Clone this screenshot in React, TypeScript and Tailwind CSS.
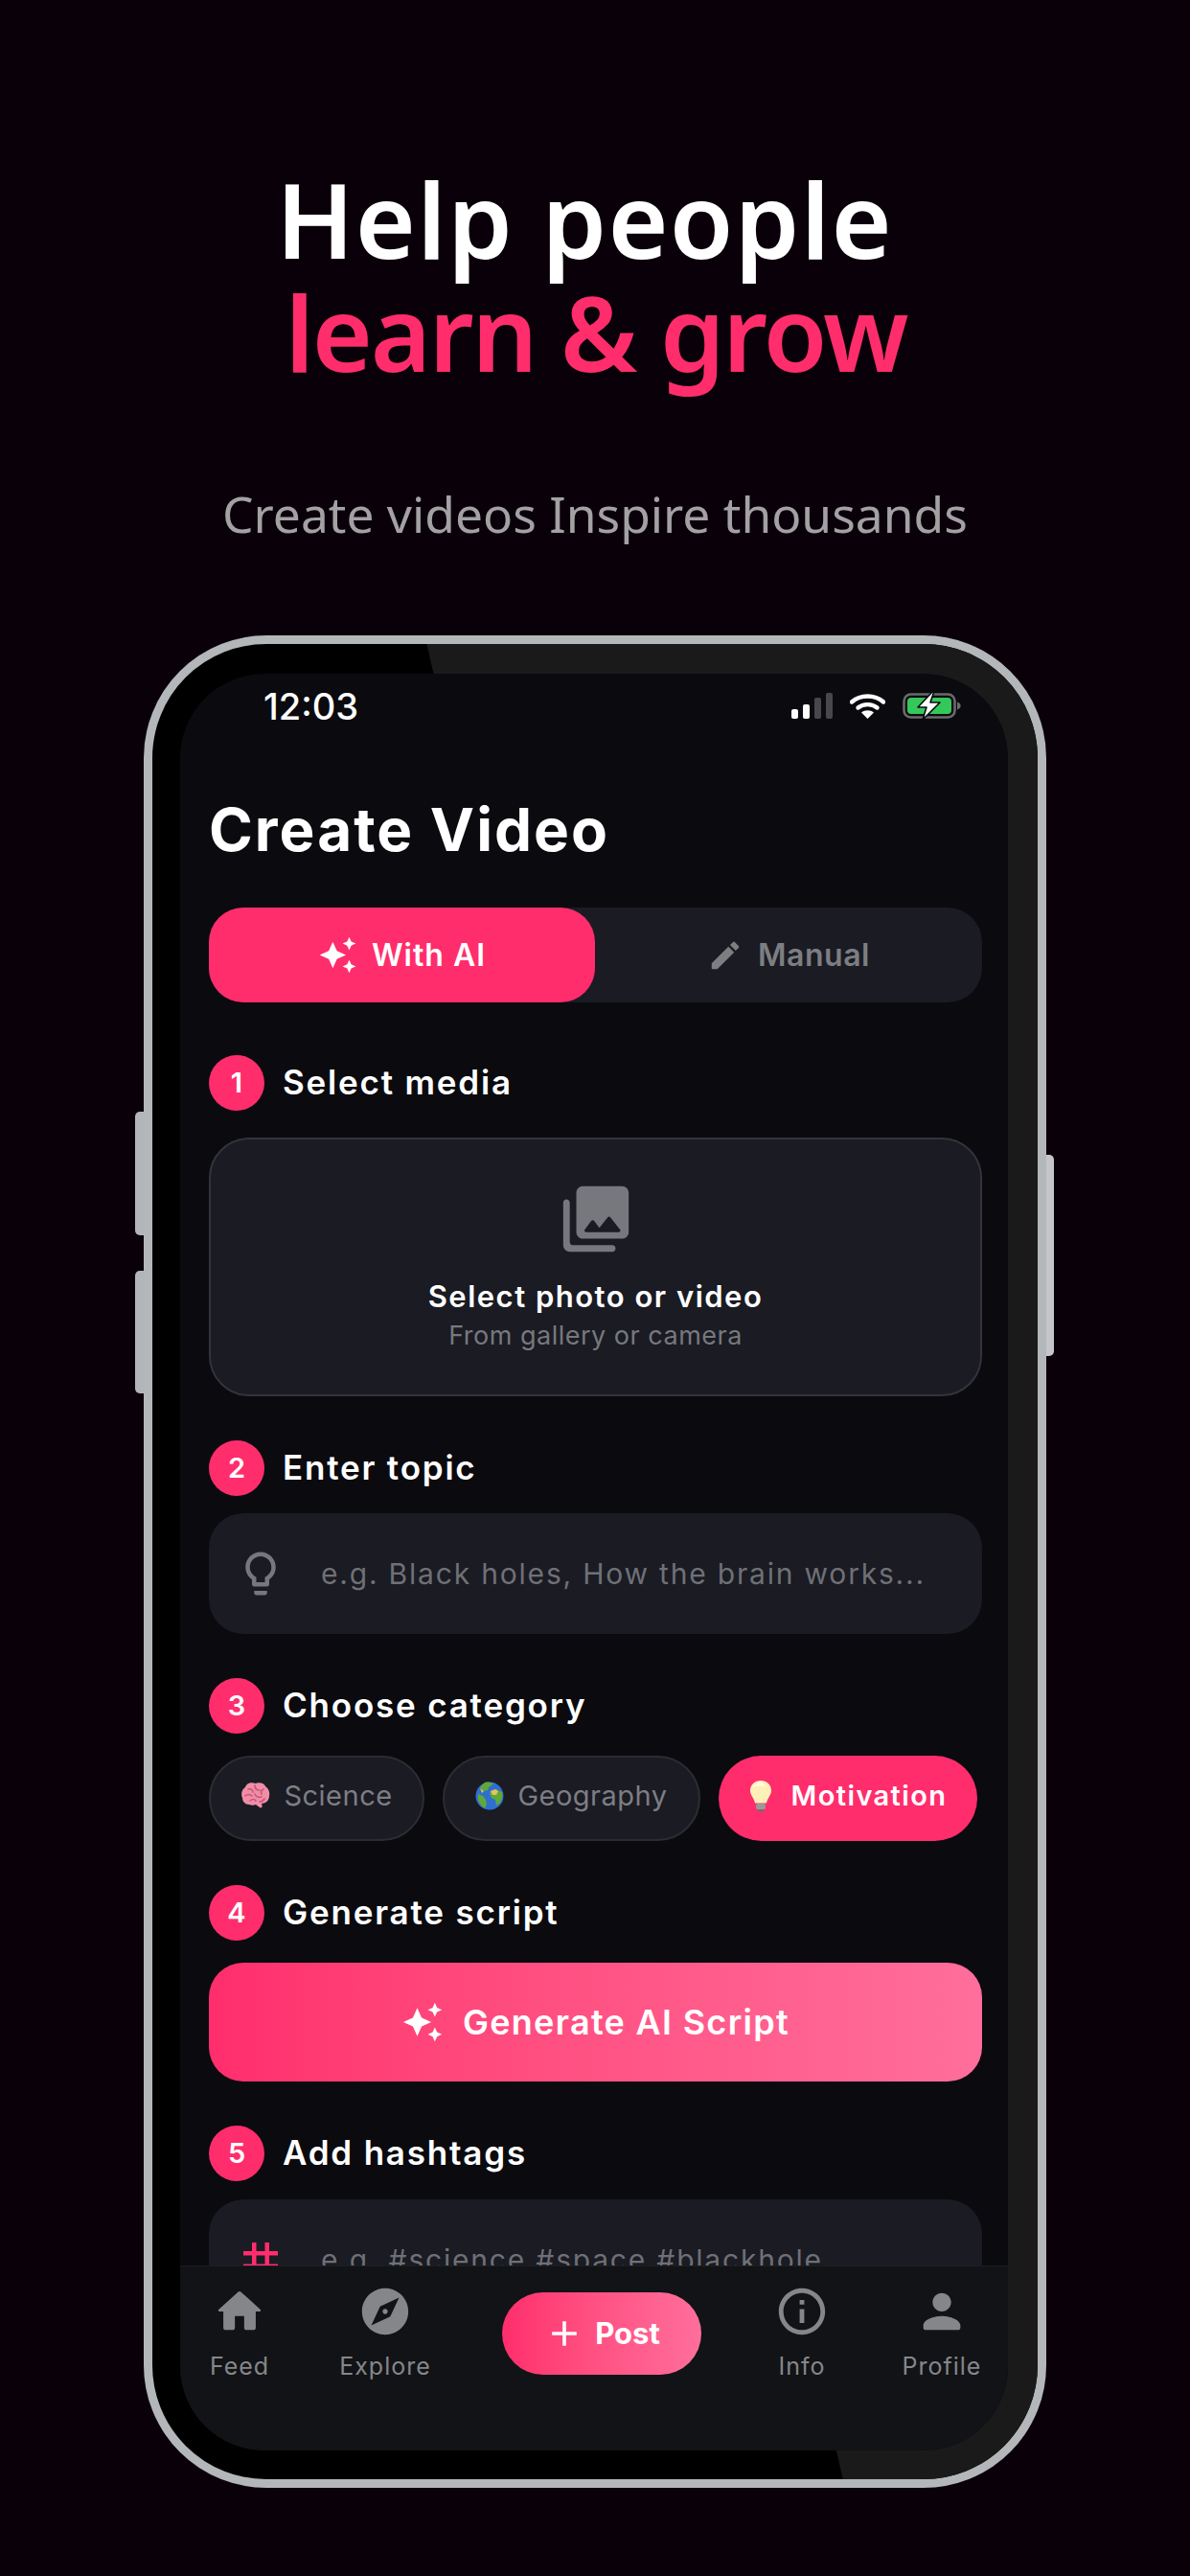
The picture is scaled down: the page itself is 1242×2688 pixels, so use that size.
import { MdAdd, MdAutoAwesome, MdExplore, MdInfoOutline, MdLightbulbOutline, MdTag } from "react-icons/md";

const HOME = "M10 19v-5h4v5c0 .55.45 1 1 1h3c.55 0 1-.45 1-1v-7h1.7c.46 0 .68-.57.33-.87L12.67 3.6c-.38-.34-.96-.34-1.34 0l-8.36 7.53c-.34.3-.13.87.33.87H5v7c0 .55.45 1 1 1h3c.55 0 1-.45 1-1z";
const PERSON = "M12 12c2.21 0 4-1.79 4-4s-1.79-4-4-4-4 1.79-4 4 1.79 4 4 4zm0 2c-2.67 0-8 1.34-8 4v1c0 .55.45 1 1 1h14c.55 0 1-.45 1-1v-1c0-2.66-5.33-4-8-4z";
const EDIT = "M3 17.46v3.04c0 .28.22.5.5.5h3.04c.13 0 .26-.05.35-.15L17.81 9.94l-3.75-3.75L3.15 17.1c-.1.1-.15.22-.15.36zM20.71 7.04c.39-.39.39-1.02 0-1.41l-2.34-2.34c-.39-.39-1.02-.39-1.41 0l-1.83 1.83 3.75 3.75 1.83-1.83z";
const PHOTOS = "M22 16V4c0-1.1-.9-2-2-2H8c-1.1 0-2 .9-2 2v12c0 1.1.9 2 2 2h12c1.1 0 2-.9 2-2zm-10.6-3.47 1.63 2.18 2.58-3.22c.2-.25.58-.25.78 0l2.96 3.7c.26.33.03.81-.39.81H9c-.41 0-.65-.47-.4-.8l2-2.67c.2-.26.6-.26.8 0zM2 7v13c0 1.1.9 2 2 2h13c.55 0 1-.45 1-1s-.45-1-1-1H5c-.55 0-1-.45-1-1V7c0-.55-.45-1-1-1s-1 .45-1 1z";

function Glyph({ d, size, className }: { d: string; size: number; className?: string }) {
  return (
    <svg viewBox="0 0 24 24" width={size} height={size} fill="currentColor" className={className}>
      <path d={d} />
    </svg>
  );
}

function StatusIcons() {
  return (
    <div className="flex items-center">
      <svg width="43" height="27" viewBox="0 0 43 27">
        <rect x="0" y="17" width="7" height="10" rx="2" fill="#fff" />
        <rect x="12" y="12" width="7" height="15" rx="2" fill="#fff" />
        <rect x="24" y="5" width="7" height="22" rx="2" fill="#48484c" />
        <rect x="36" y="0" width="7" height="27" rx="2" fill="#48484c" />
      </svg>
      <svg width="37" height="27" viewBox="0 0 37 27" className="ml-[18px]">
        <path d="M2 9.5C11 1.5 26 1.5 35 9.5" fill="none" stroke="#fff" strokeWidth="4.4" strokeLinecap="round" />
        <path d="M8.5 15.5C14 11 23 11 28.5 15.5" fill="none" stroke="#fff" strokeWidth="4.4" strokeLinecap="round" />
        <path d="M18.5 27l-6.5-6.5c3.5-3 9.5-3 13 0z" fill="#fff" />
      </svg>
      <svg width="61" height="30" viewBox="0 0 61 30" className="ml-[18px]">
        <rect x="1.5" y="3.5" width="53" height="24" rx="7" fill="none" stroke="#6a6a6d" strokeWidth="2.6" />
        <rect x="5" y="7" width="46" height="17" rx="4" fill="#34c759" />
        <path d="M57 11.5c2.4.7 3.6 2.2 3.6 4s-1.200 3.300-3.600 4z" fill="#6a6a6d" />
        <path d="M32 0 16 17h9l-4 13 18-18h-10l4-12z" fill="#fff" stroke="#0a0a0f" strokeWidth="1.6" strokeLinejoin="round" />
      </svg>
    </div>
  );
}

function StepHeader({ n, title, className }: { n: number; title: string; className?: string }) {
  return (
    <div className={`flex items-center gap-[19px] ${className ?? ""}`}>
      <div className="w-[58px] h-[58px] rounded-full bg-[#ff2d6c] flex items-center justify-center text-white text-[29px] font-semibold">
        {n}
      </div>
      <span className="pb-[2px] text-white text-[35px] font-semibold tracking-[1.8px]">{title}</span>
    </div>
  );
}

function BrainEmoji() {
  return (
    <svg width="31" height="31" viewBox="0 0 31 31">
      <path d="M15.500 3C11 1 6 3 5 7 1.500 9 0 14 2 18c0 4 3 7 7 7 2 1 5 1 7 0l4 3c1.500 1 3 0 2.500-2l-.5-2c4 0 8-3 8-8 1-4-1-8-4-10C25 3 20 1 15.500 3z" fill="#f08ea8" />
      <path d="M8 9c3-1 5 1 5 3M5 16c2-2 5-2 7 0M15 5c0 3 2 5 5 5M24 9c-2 1-3 3-2 5M15 14c1 3 4 4 7 3M10 21c2-2 5-2 6 0M20 22c2 0 4-1 5-3" fill="none" stroke="#c9587a" strokeWidth="1.700" strokeLinecap="round" />
    </svg>
  );
}

function GlobeEmoji() {
  return (
    <svg width="30" height="32" viewBox="0 0 30 32">
      <circle cx="15" cy="16" r="14.500" fill="#2f6fd0" />
      <path d="M10 2c-2 2-4 3-5 6l4 3 4-1 1-3 3-2 2-2c-3-1-6-2-9-1zM16 11l5-2 7 3c1 4 0 9-3 12l-3 2-1-6-4-2-2-4zM3 14l5 2 3 4 1 5-2 4c-5-3-8-8-7-15z" fill="#5fa83a" />
      <path d="M16 11l5-2 3 2-2 4-4 0zM5 8l4 3-2 2z" fill="#e3c45a" />
    </svg>
  );
}

function BulbEmoji() {
  return (
    <svg width="24" height="34" viewBox="0 0 24 34">
      <path d="M12 1C5.500 1 1 5.500 1 11.500c0 5 4 7.500 5 13h12c1-5.500 5-8 5-13C23 5.500 18.500 1 12 1z" fill="#fff0b8" />
      <path d="M12 3c-4 0-7 2.500-8 6 3-3 9-3 13-1-1-3-3-5-5-5z" fill="#fffbe8" />
      <rect x="7" y="25" width="10" height="6" rx="2" fill="#9a9a9a" />
      <rect x="9" y="31" width="6" height="2.500" rx="1" fill="#6f6f6f" />
    </svg>
  );
}

function NavItem({ label, children }: { label: string; children: React.ReactNode }) {
  return (
    <div className="flex flex-col items-center text-[#85868a]">
      <div className="h-[58px] flex items-center justify-center">{children}</div>
      <span className="mt-[13px] text-[25px] leading-[30px] tracking-[1px]">{label}</span>
    </div>
  );
}

export default function App() {
  return (
    <div className="w-[1242px] h-[2688px] bg-[#0a0009] overflow-hidden flex flex-col items-center font-[Inter,sans-serif]">
      {/* marketing headline */}
      <div className="pt-[170px] text-center font-['Noto_Sans',sans-serif]">
        <h1 className="mr-[22px] text-[108px] leading-[118px] font-semibold tracking-[1.3px] text-white">Help people</h1>
        <h1 className="ml-[2px] text-[108px] leading-[118px] font-semibold tracking-[-2.2px] text-[#ff2d6c]">learn &amp; grow</h1>
        <p className="mt-[95px] text-[51.5px] leading-[70px] text-[#a3a1a4]">Create videos Inspire thousands</p>
      </div>

      {/* phone */}
      <div className="relative mt-[92px] w-[942px] h-[1933px] shrink-0">
        <div className="absolute left-[-9px] top-[497px] w-[12px] h-[129px] rounded-l-[5px] bg-[#b3b6b9]" />
        <div className="absolute left-[-9px] top-[663px] w-[12px] h-[128px] rounded-l-[5px] bg-[#b3b6b9]" />
        <div className="absolute right-[-8px] top-[542px] w-[12px] h-[210px] rounded-r-[5px] bg-[#c4c6c9]" />

        <div className="relative w-full h-full rounded-[128px] border-[9px] border-[#b4b7ba] bg-black overflow-hidden pl-[29px] pr-[31px] pt-[31px] pb-[30px]">
          <div className="absolute inset-0 bg-[#1a1a1a] [clip-path:polygon(31%_0,100%_0,100%_100%,78%_100%)]" />

          {/* screen */}
          <div className="relative w-full h-full rounded-[88px] bg-[#0a0a0f] overflow-hidden flex flex-col">
            <div className="flex-1 min-h-0 overflow-hidden pl-[30px] pr-[27px]">
              <div className="flex items-center justify-between pl-[57px] pr-[22px] pt-[16px] h-[50px]">
                <span className="pt-[2px] text-white text-[38px] leading-[44px] font-medium">12:03</span>
                <StatusIcons />
              </div>

              <h2 className="mt-[75px] text-white text-[62px] leading-[75px] font-bold tracking-[2px]">Create Video</h2>

              <div className="mt-[44px] h-[99px] rounded-[36px] bg-[#1a1b23] flex">
                <div className="w-[403px] rounded-[36px] bg-[#ff2d6c] flex items-center justify-center gap-[15px] text-white">
                  <MdAutoAwesome size={41} />
                  <span className="text-[32px] font-semibold tracking-[1px]">With AI</span>
                </div>
                <div className="flex-1 flex items-center justify-center gap-[15px] text-[#7d7e82]">
                  <Glyph d={EDIT} size={38} />
                  <span className="text-[32px] font-semibold tracking-[0.5px]">Manual</span>
                </div>
              </div>

              <StepHeader n={1} title="Select media" className="mt-[55px]" />
              <div className="mt-[28px] h-[270px] rounded-[42px] bg-[#1a1b23] border-2 border-[#33343b] flex flex-col items-center pt-[42px]">
                <Glyph d={PHOTOS} size={82} className="text-[#77787d]" />
                <span className="mt-[20px] text-white text-[31px] leading-[40px] font-semibold tracking-[1.5px]">Select photo or video</span>
                <span className="mt-[3px] text-[#77787d] text-[27px] leading-[36px] tracking-[0.5px]">From gallery or camera</span>
              </div>

              <StepHeader n={2} title="Enter topic" className="mt-[46px]" />
              <div className="mt-[18px] h-[126px] rounded-[36px] bg-[#1a1b23] flex items-center pl-[27px] gap-[36px]">
                <MdLightbulbOutline size={54} className="text-[#77787d]" />
                <span className="text-[#6f7076] text-[30px] tracking-[1.8px]">e.g. Black holes, How the brain works...</span>
              </div>

              <StepHeader n={3} title="Choose category" className="mt-[46px]" />
              <div className="mt-[23px] flex gap-[19px]">
                <div className="w-[225px] h-[89px] rounded-full bg-[#1a1b23] border-2 border-[#2c2d33] flex items-center justify-center gap-[14px] pb-[6px]">
                  <BrainEmoji />
                  <span className="text-[#7d7e84] text-[29px] tracking-[0.5px]">Science</span>
                </div>
                <div className="w-[269px] h-[89px] rounded-full bg-[#1a1b23] border-2 border-[#2c2d33] flex items-center justify-center gap-[14px] pb-[6px]">
                  <GlobeEmoji />
                  <span className="text-[#7d7e84] text-[29px] tracking-[0.5px]">Geography</span>
                </div>
                <div className="w-[270px] h-[89px] rounded-full bg-[#ff2d6c] flex items-center justify-center gap-[20px] pb-[6px]">
                  <BulbEmoji />
                  <span className="text-white text-[29px] font-semibold tracking-[1.4px]">Motivation</span>
                </div>
              </div>

              <StepHeader n={4} title="Generate script" className="mt-[46px]" />
              <div className="mt-[23px] h-[124px] rounded-[36px] bg-linear-to-r from-[#ff2d6c] to-[#ff6e9c] flex items-center justify-center gap-[20px] text-white">
                <MdAutoAwesome size={44} />
                <span className="text-[36px] font-semibold tracking-[1.3px]">Generate AI Script</span>
              </div>

              <StepHeader n={5} title="Add hashtags" className="mt-[46px]" />
              <div className="mt-[19px] h-[126px] rounded-[36px] bg-[#1a1b23] flex items-center pl-[27px] gap-[36px]">
                <MdTag size={54} className="text-[#ff2d6c]" />
                <span className="text-[#6f7076] text-[30px] tracking-[1.8px]">e.g. #science #space #blackhole</span>
              </div>
            </div>

            {/* bottom nav */}
            <div className="h-[193px] shrink-0 bg-[#111316] border-t border-[#1c1e22] grid grid-cols-[124px_180px_272px_146px_146px] pt-[18px] items-start justify-items-center">
              <NavItem label="Feed">
                <Glyph d={HOME} size={58} />
              </NavItem>
              <NavItem label="Explore">
                <MdExplore size={58} />
              </NavItem>
              <div className="mt-[9px] w-[208px] h-[86px] rounded-full bg-linear-to-r from-[#ff2d6c] to-[#ff6e9c] flex items-center justify-center gap-[10px] text-white">
                <MdAdd size={44} />
                <span className="text-[31px] font-bold">Post</span>
              </div>
              <NavItem label="Info">
                <MdInfoOutline size={58} />
              </NavItem>
              <NavItem label="Profile">
                <Glyph d={PERSON} size={58} />
              </NavItem>
            </div>
          </div>
        </div>
      </div>
    </div>
  );
}
